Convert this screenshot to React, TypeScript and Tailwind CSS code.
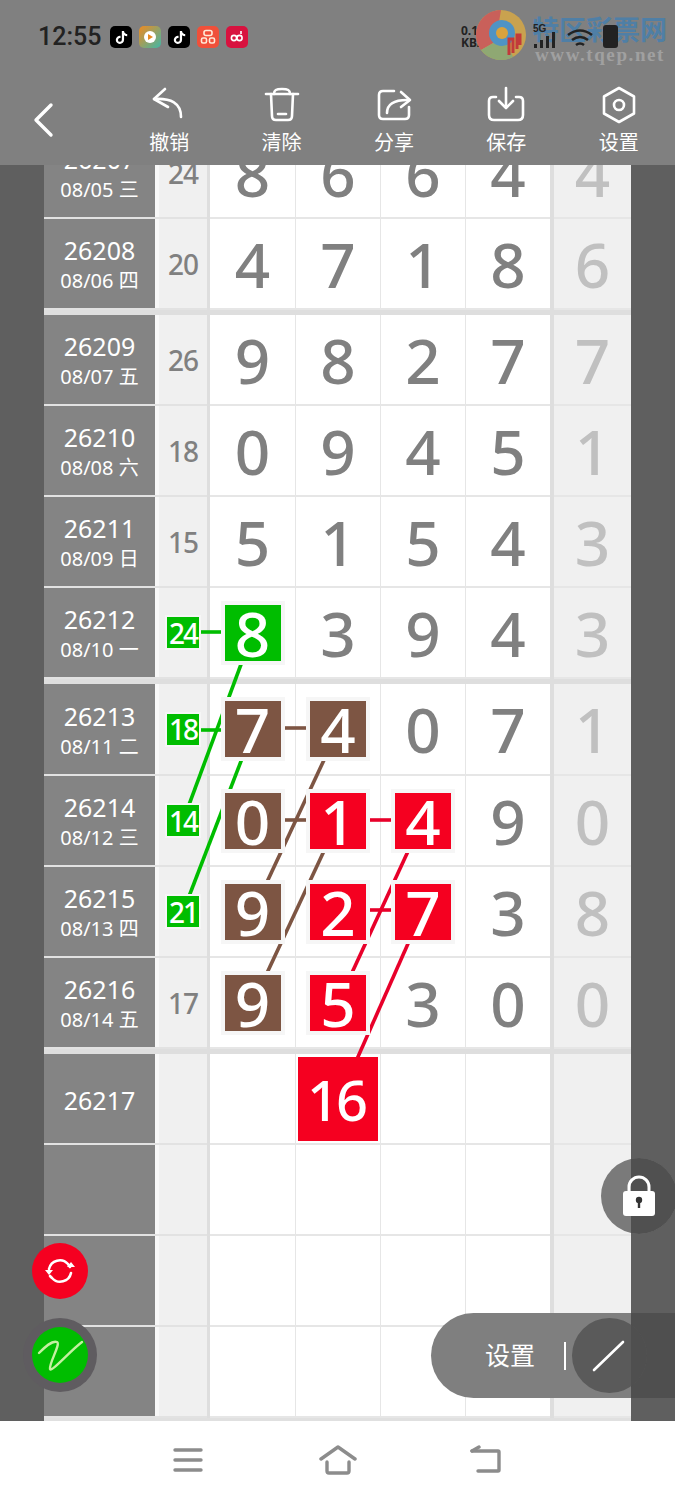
import React from "react";
import { FaTiktok } from "react-icons/fa";

type Tone = "g" | "b" | "r" | "";
type Cell = [string, Tone];
type Row = { id: string; date?: string; sum?: string; sumG?: boolean; cells?: Cell[]; last?: string; h: string; big?: boolean };

const n = (s: string): Cell => [s, ""];
const rows: (Row | "sep")[] = [
  { id: "26207", date: "08/05 三", sum: "24", cells: [n("8"), n("6"), n("6"), n("4")], last: "4", h: "h-[54px]" },
  { id: "26208", date: "08/06 四", sum: "20", cells: [n("4"), n("7"), n("1"), n("8")], last: "6", h: "h-[91px]" },
  "sep",
  { id: "26209", date: "08/07 五", sum: "26", cells: [n("9"), n("8"), n("2"), n("7")], last: "7", h: "h-[91px]" },
  { id: "26210", date: "08/08 六", sum: "18", cells: [n("0"), n("9"), n("4"), n("5")], last: "1", h: "h-[91px]" },
  { id: "26211", date: "08/09 日", sum: "15", cells: [n("5"), n("1"), n("5"), n("4")], last: "3", h: "h-[91px]" },
  { id: "26212", date: "08/10 一", sum: "24", sumG: true, cells: [["8", "g"], n("3"), n("9"), n("4")], last: "3", h: "h-[91px]" },
  "sep",
  { id: "26213", date: "08/11 二", sum: "18", sumG: true, cells: [["7", "b"], ["4", "b"], n("0"), n("7")], last: "1", h: "h-[92px]" },
  { id: "26214", date: "08/12 三", sum: "14", sumG: true, cells: [["0", "b"], ["1", "r"], ["4", "r"], n("9")], last: "0", h: "h-[91px]" },
  { id: "26215", date: "08/13 四", sum: "21", sumG: true, cells: [["9", "b"], ["2", "r"], ["7", "r"], n("3")], last: "8", h: "h-[91px]" },
  { id: "26216", date: "08/14 五", sum: "17", cells: [["9", "b"], ["5", "r"], n("3"), n("0")], last: "0", h: "h-[91px]" },
  "sep",
  { id: "26217", big: true, h: "h-[91px]" },
  { id: "", h: "h-[91px]" },
  { id: "", h: "h-[91px]" },
  { id: "", h: "h-[91px]" },
];

function Square({ v, tone }: { v: string; tone: Tone }) {
  const bg = tone === "g" ? "bg-[#00bd00]" : tone === "b" ? "bg-[#7d5543]" : "bg-[#f50020]";
  return (
    <div className={`relative z-20 flex h-[56px] w-[56px] items-center justify-center text-[62px] font-medium leading-none text-white ring-4 ring-[#f6f6f6] ${bg}`}>
      {v}
    </div>
  );
}

function TableRow({ r }: { r: Row }) {
  const clipped = r.h === "h-[54px]";
  const fill = clipped ? "h-[91px]" : "h-full";
  return (
    <div className={`flex shrink-0 overflow-hidden ${r.h} ${clipped ? "items-end" : ""}`}>
      <div className={`flex w-[111px] shrink-0 flex-col items-center justify-center border-b-2 border-[#e2e2e2] bg-[#848484] pt-[3px] text-white ${fill}`}>
        <div className="text-[25px] leading-[30px]">{r.id}</div>
        {r.date && <div className="mt-[2px] text-[20px] leading-[28px]">{r.date}</div>}
      </div>
      <div className={`w-[4px] shrink-0 border-b-2 border-[#e2e2e2] bg-[#f8f8f8] ${fill}`} />
      <div className={`flex w-[48px] shrink-0 items-center justify-center border-b-2 border-[#e2e2e2] bg-[#f0f0f0] ${fill}`}>
        {r.sumG ? (
          <div className="relative z-20 flex h-[31px] w-[32px] items-center justify-center bg-[#00bd00] text-[28px] font-medium leading-none tracking-[-2px] text-white ring-2 ring-[#f6f6f6]">
            {r.sum}
          </div>
        ) : (
          <div className="text-[28px] font-medium leading-none tracking-[-1px] text-[#808080]">{r.sum}</div>
        )}
      </div>
      <div className={`w-[3px] shrink-0 bg-[#dedede] ${fill}`} />
      {[0, 1, 2, 3].map((i) => {
        const c = r.cells?.[i];
        return (
          <div key={i} className={`flex w-[85px] shrink-0 items-center justify-center border-b-2 border-[#e6e6e6] bg-white text-[62px] font-medium leading-none text-[#808080] ${i > 0 ? "border-l" : ""} ${fill}`}>
            {c && (c[1] ? <Square v={c[0]} tone={c[1]} /> : c[0])}
            {r.big && i === 1 && (
              <div className="relative z-20 flex h-[84px] w-[80px] shrink-0 items-center justify-center bg-[#f50020] pr-[4px] text-[56px] font-medium leading-none tracking-[-3px] text-white">
                16
              </div>
            )}
          </div>
        );
      })}
      <div className={`w-[4px] shrink-0 bg-[#dedede] ${fill}`} />
      <div className={`flex w-[77px] shrink-0 items-center justify-center border-b-2 border-[#e6e6e6] bg-[#f0f0f0] text-[62px] font-medium leading-none text-[#c0c0c0] ${fill}`}>
        {r.last}
      </div>
    </div>
  );
}

function Lines() {
  const seg = (c: string, p: number[][], w = 3.6) =>
    p.map((l, i) => <line key={c + i} x1={l[0]} y1={l[1]} x2={l[2]} y2={l[3]} stroke={c} strokeWidth={w} />);
  return (
    <svg className="pointer-events-none absolute inset-0 z-10 h-full w-full" viewBox="44 165 587 1256">
      {seg("#00bd00", [[253, 632, 183, 821], [253, 730, 183, 912], [199, 632, 225, 632], [199, 730, 225, 730]])}
      {seg("#7d5543", [[338, 730, 253, 912], [338, 821, 253, 1003], [281, 728, 310, 728], [281, 820, 310, 820]])}
      {seg("#e8002a", [[422, 821, 338, 1003], [422, 912, 338, 1102], [366, 820, 394, 820], [366, 910, 394, 910]])}
    </svg>
  );
}

const stroke = { fill: "none", stroke: "#fff", strokeWidth: 2.6, strokeLinecap: "round" as const, strokeLinejoin: "round" as const };

function ToolItem({ label, children }: { label: string; children: React.ReactNode }) {
  return (
    <div className="flex w-[112.4px] shrink-0 flex-col items-center">
      <svg width="38" height="38" viewBox="0 0 38 38" {...stroke}>{children}</svg>
      <div className="mt-[5px] text-[20px] leading-[28px] text-white">{label}</div>
    </div>
  );
}

function AppIcon({ bg, children }: { bg: string; children: React.ReactNode }) {
  return <div className={`flex h-[22px] w-[22px] items-center justify-center overflow-hidden rounded-[5px] text-[13px] text-white ${bg}`}>{children}</div>;
}

function Header() {
  return (
    <div className="relative z-30 h-[165px] shrink-0 bg-[#808080]">
      <div className="flex h-[86px] items-start pl-[38px] pt-[21px]">
        <div className="mr-[9px] font-['Roboto'] text-[25px] font-medium leading-[32px] text-[#222]">12:55</div>
        <div className="mt-[5px] flex gap-[7px]">
          <AppIcon bg="bg-black"><FaTiktok /></AppIcon>
          <AppIcon bg="bg-[linear-gradient(135deg,#f08a20,#3fb8a8)]">
            <svg width="14" height="14" viewBox="0 0 14 14"><circle cx="7" cy="7" r="6" fill="#fff" /><path d="M5 4l5 3-5 3z" fill="#e88a20" /></svg>
          </AppIcon>
          <AppIcon bg="bg-black"><FaTiktok /></AppIcon>
          <AppIcon bg="bg-[#f0503a]">
            <svg width="16" height="16" viewBox="0 0 16 16" fill="none" stroke="#ffe9d8" strokeWidth="1.6"><rect x="4" y="1.5" width="8" height="5" rx="2" /><rect x="1.5" y="9" width="5" height="5" rx="1.5" /><rect x="9.5" y="9" width="5" height="5" rx="1.5" /></svg>
          </AppIcon>
          <AppIcon bg="bg-[#d8123f]">
            <svg width="16" height="16" viewBox="0 0 16 16" fill="none" stroke="#fff" strokeWidth="1.6"><circle cx="5" cy="9" r="2.6" /><circle cx="10.5" cy="9" r="2.6" /><path d="M12 2v3" /></svg>
          </AppIcon>
        </div>
        <div className="absolute left-[461px] top-[25px] text-[12px] font-bold leading-[12px] text-[#222]">0.10<br />KB/s</div>
        <div className="absolute left-[532px] top-[13px] font-['Noto_Sans_CJK_SC'] text-[27px] font-bold leading-[32px] text-[#4f7fa6]">特区彩票网</div>
        <div className="absolute left-[535px] top-[44px] font-['Liberation_Serif'] text-[19px] font-bold leading-[22px] tracking-[1.6px] text-[#a0a0a0]">www.tqep.net</div>
        <svg className="absolute left-[530px] top-[22px]" width="92" height="30" viewBox="0 0 92 30">
          <text x="3" y="10" fontSize="10" fontWeight="700" fill="#222" fontFamily="Liberation Sans">5G</text>
          <path d="M4 26h3v-4H4zM10 26h3v-8h-3zM16 26h3v-12h-3zM22 26h3v-16h-3z" fill="#222" />
          <path d="M38 13q12-9 24 0M42 18q8-6 16 0M46 23q4-3 8 0" fill="none" stroke="#222" strokeWidth="2.6" />
          <rect x="73" y="3" width="15" height="23" rx="3" fill="#222" />
        </svg>
        <svg className="absolute left-[471px] top-[5px]" width="60" height="60" viewBox="0 0 60 60">
          <circle cx="30" cy="30" r="25" fill="#c9a24f" />
          <path d="M30 5a25 25 0 0 0-20 40l14-8a12 12 0 0 1 4-20z" fill="#c9605a" />
          <path d="M10 45a25 25 0 0 0 32 7l-6-14a12 12 0 0 1-12-1z" fill="#8fa873" />
          <circle cx="31" cy="28" r="13" fill="#4f93c4" />
          <circle cx="31" cy="28" r="6" fill="#d9a23c" />
          <path d="M38 50V34h4v14M46 44V30h3v10" stroke="#c23a3a" strokeWidth="3" fill="none" />
        </svg>
      </div>
      <div className="flex items-start">
        <svg className="ml-[30px] mt-[13px] shrink-0" width="30" height="40" viewBox="0 0 30 40" fill="none" stroke="#fff" strokeWidth="3.4" strokeLinecap="round" strokeLinejoin="round">
          <path d="M21 6L6 21l15 15" />
        </svg>
        <div className="ml-[53px] flex">
          <ToolItem label="撤销"><path d="M15 3L4 13l14 8" /><path d="M4 13c17-1 27 4 27 18" /></ToolItem>
          <ToolItem label="清除"><path d="M3 8h32" /><path d="M11 8c0-4 2-5 8-5s8 1 8 5" /><path d="M8 8l1 22q0 4 4 4h12q4 0 4-4l1-22" /><path d="M15 28h8" /></ToolItem>
          <ToolItem label="分享"><path d="M19 5H8q-4 0-4 4v20q0 4 4 4h22q4 0 4-4v-8" /><path d="M12 27q0-13 20-13" /><path d="M26 6l9 8-9 7" /></ToolItem>
          <ToolItem label="保存"><path d="M9 11H6q-4 0-4 4v14q0 5 5 5h24q5 0 5-5V15q0-4-4-4h-3" /><path d="M19 2v19" /><path d="M12 15l7 7 7-7" /></ToolItem>
          <ToolItem label="设置"><path d="M19 2l15 8.500v17L19 36 4 27.500v-17z" /><circle cx="19" cy="19" r="5" /></ToolItem>
        </div>
      </div>
    </div>
  );
}

export default function App() {
  return (
    <div className="relative flex h-[1500px] w-[675px] flex-col overflow-hidden bg-white font-['Noto_Sans','Noto_Sans_CJK_SC',sans-serif]">
      <Header />
      <div className="flex h-[1256px] shrink-0 bg-[#e0e0e0]">
        <div className="w-[44px] shrink-0 bg-[#5f5f5f]" />
        <div className="relative flex w-[587px] shrink-0 flex-col overflow-hidden">
          {rows.map((r, i) => (r === "sep" ? <div key={i} className="h-[5px] shrink-0 bg-[#dedede]" /> : <TableRow key={i} r={r} />))}
          <Lines />
        </div>
        <div className="w-[44px] shrink-0 bg-[#5f5f5f]" />
      </div>
      <div className="flex flex-1 items-center bg-white pb-[1px]">
        <svg className="ml-[172px]" width="32" height="28" viewBox="0 0 32 28" fill="none" stroke="#8c8c8c" strokeWidth="3.4" strokeLinecap="round">
          <path d="M3 4h26M3 14h26M3 24h26" />
        </svg>
        <svg className="ml-[115px]" width="38" height="30" viewBox="0 0 38 30" fill="none" stroke="#8c8c8c" strokeWidth="3.4" strokeLinecap="round" strokeLinejoin="round">
          <path d="M2 14L19 2l17 12" /><path d="M8 17v9q0 2 2 2h18q2 0 2-2v-9" />
        </svg>
        <svg className="ml-[113px]" width="32" height="30" viewBox="0 0 32 30" fill="none" stroke="#8c8c8c" strokeWidth="3.4" strokeLinecap="round" strokeLinejoin="round">
          <path d="M2 6h26q1 0 1 1v18q0 1-1 1H8" /><path d="M2 6l7-4" />
        </svg>
      </div>

      <div className="absolute left-[32px] top-[1243px] z-40 flex h-[56px] w-[56px] items-center justify-center rounded-full bg-[#f50020]">
        <svg width="34" height="34" viewBox="0 0 34 34" fill="none" stroke="#fff" strokeWidth="2.6" strokeLinecap="round">
          <path d="M6 15a11 11 0 0 1 19-5l2 3" /><path d="M28 19a11 11 0 0 1-19 5l-2-2" />
          <path d="M2 16h8l-4 5zM24 13h8l-4-5z" fill="#fff" stroke="none" />
        </svg>
      </div>
      <div className="absolute left-[23px] top-[1318px] z-40 flex h-[74px] w-[74px] items-center justify-center rounded-full bg-[#5f5c60]">
        <div className="flex h-[56px] w-[56px] items-center justify-center rounded-full bg-[#00bd00]">
          <svg width="56" height="56" viewBox="0 0 56 56" fill="none" stroke="#c4f0a0" strokeWidth="2.4" strokeLinecap="round">
            <path d="M7 26C13 20 20 13 25 15C29 17 17 36 18 42C19 46 38 24 50 15" />
          </svg>
        </div>
      </div>

      <div className="absolute left-[601px] top-[1158px] z-40 flex h-[76px] w-[76px] items-center justify-center overflow-hidden rounded-full bg-[#7a7a7a]">
        <div className="absolute bottom-0 right-0 top-0 w-[46px] bg-[#505050]" />
        <svg className="relative" width="36" height="44" viewBox="0 0 36 44">
          <path d="M8 20v-7a10 10 0 0 1 20 0v7" fill="none" stroke="#fff" strokeWidth="3" />
          <rect x="2" y="17" width="32" height="25" rx="3" fill="#fff" />
          <circle cx="18" cy="26" r="3.200" fill="#333" />
          <rect x="16.800" y="27" width="2.400" height="7" fill="#333" />
        </svg>
      </div>

      <div className="absolute left-[431px] top-[1313px] z-40 flex h-[85px] w-[244px] items-center overflow-hidden rounded-l-full bg-[#7f7f7f]">
        <div className="absolute bottom-0 right-0 top-0 w-[44px] bg-[#4f4f4f]" />
        <div className="absolute left-[54px] text-[25px] leading-none text-white">设置</div>
        <div className="absolute left-[133px] h-[28px] w-[2px] bg-white" />
        <div className="absolute left-[141px] h-[75px] w-[75px] overflow-hidden rounded-full bg-[#5a5a5a]">
          <div className="absolute bottom-0 right-0 top-0 w-[16px] bg-[#4f4f4f]" />
          <svg className="absolute left-[20px] top-[22px]" width="34" height="32" viewBox="0 0 34 32" stroke="#fff" strokeWidth="2.600" strokeLinecap="round">
            <path d="M2 30L31 2" />
          </svg>
        </div>
      </div>
    </div>
  );
}
